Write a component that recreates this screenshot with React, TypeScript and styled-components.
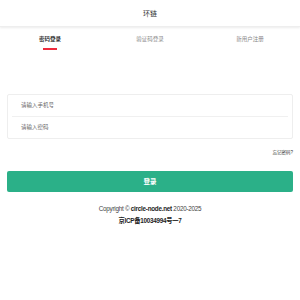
import React from "react";
import styled, { createGlobalStyle } from "styled-components";

const Global = createGlobalStyle`
  html, body { margin: 0; padding: 0; background: #fff; }
  body { font-family: "Liberation Sans", "Noto Sans CJK SC", sans-serif; }
`;

const Page = styled.div`
  width: 300px;
  display: flex;
  flex-direction: column;
`;

const Header = styled.div`
  height: 26px;
  display: flex;
  align-items: center;
  justify-content: center;
  font-size: 7px;
  color: #333;
  box-shadow: 0 1px 2px rgba(0, 0, 0, 0.08);
  border-bottom: 1px solid #eee;
`;

const Tabs = styled.div`
  display: grid;
  grid-template-columns: repeat(3, 1fr);
  margin-top: 8px;
`;

const Tab = styled.div<{ $active?: boolean }>`
  display: flex;
  flex-direction: column;
  align-items: center;
  font-size: 5.5px;
  line-height: 8px;
  color: ${(p) => (p.$active ? "#333" : "#888")};
  font-weight: ${(p) => (p.$active ? 600 : 400)};
  gap: 5px;
  &::after {
    content: "";
    width: 14px;
    height: 1.5px;
    background: ${(p) => (p.$active ? "#ee2a3c" : "transparent")};
  }
`;

const Form = styled.div`
  padding: 0 7px;
  margin-top: 44px;
  display: flex;
  flex-direction: column;
`;

const Group = styled.div`
  border: 1px solid #eee;
  border-radius: 2px;
  padding: 0 4px;
  display: flex;
  flex-direction: column;
`;

const Field = styled.div<{ $last?: boolean }>`
  height: 21px;
  display: flex;
  align-items: center;
  padding-left: 9px;
  font-size: 5.5px;
  color: #666;
  border-bottom: ${(p) => (p.$last ? "none" : "1px solid #f0f0f0")};
`;

const Forgot = styled.div`
  align-self: flex-end;
  margin-top: 10px;
  font-size: 4.5px;
  color: #333;
`;

const Button = styled.div`
  margin-top: 16px;
  height: 21px;
  background: #2bb088;
  border-radius: 2px;
  color: #fff;
  font-weight: 700;
  font-size: 6.5px;
  display: flex;
  align-items: center;
  justify-content: center;
`;

const Footer = styled.div`
  margin-top: 11px;
  display: flex;
  flex-direction: column;
  align-items: center;
  font-size: 6.3px;
  line-height: 12px;
  color: #444;
  letter-spacing: -0.25px;
`;

const Bold = styled.span`
  font-weight: 700;
  color: #222;
`;

export default function App() {
  return (
    <Page>
      <Global />
      <Header>环链</Header>
      <Tabs>
        <Tab $active>密码登录</Tab>
        <Tab>验证码登录</Tab>
        <Tab>新用户注册</Tab>
      </Tabs>
      <Form>
        <Group>
          <Field>请输入手机号</Field>
          <Field $last>请输入密码</Field>
        </Group>
        <Forgot>忘记密码?</Forgot>
        <Button>登录</Button>
      </Form>
      <Footer>
        <div>
          Copyright © <Bold>circle-node.net</Bold> 2020-2025
        </div>
        <Bold>京ICP备10034994号一7</Bold>
      </Footer>
    </Page>
  );
}
